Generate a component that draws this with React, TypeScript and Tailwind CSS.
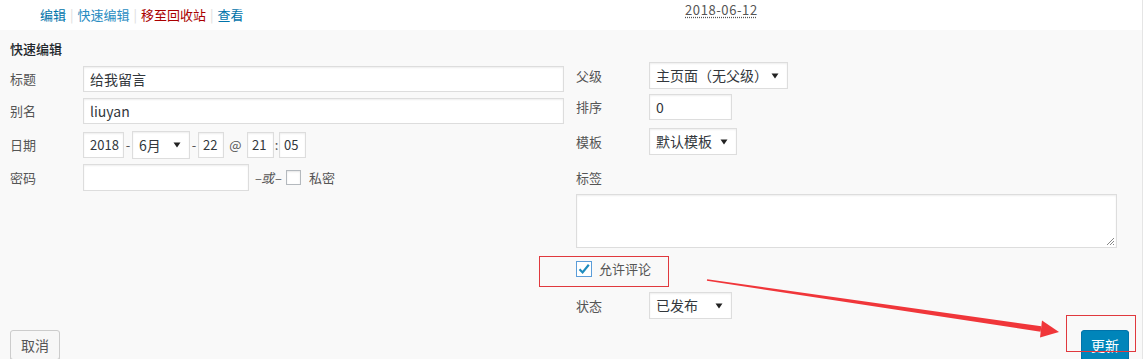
import React from 'react';

const font = { fontFamily: '"Noto Sans CJK SC", "Noto Sans", sans-serif' };

const Caret = () => (
    <svg width="8" height="6" viewBox="0 0 8 6" className="shrink-0">
        <path d="M0.5 0.5 L7.5 0.5 L4 5.5 Z" fill="#222" />
    </svg>
);

const Select: React.FC<{ value: string; className: string }> = ({ value, className }) => (
    <div className={`flex items-center justify-between bg-white border border-[#ddd] shadow-[0_1px_2px_rgba(0,0,0,0.07)_inset] pl-[6px] pr-[8px] text-[14px] text-[#32373c] ${className}`}>
        <span>{value}</span>
        <Caret />
    </div>
);

const Box: React.FC<{ value?: string; className: string }> = ({ value, className }) => (
    <div className={`flex items-center bg-white border border-[#ddd] shadow-[0_1px_2px_rgba(0,0,0,0.07)_inset] px-[6px] text-[#32373c] ${className}`}>
        {value}
    </div>
);

const Label: React.FC<{ text: string }> = ({ text }) => (
    <span className="w-[73px] shrink-0 text-[13px] text-[#555]">{text}</span>
);

const App: React.FC = () => {
    return (
        <div className="relative w-[1143px] h-[359px] overflow-hidden bg-white border-r border-[#e5e5e5]" style={font}>
            {/* Row actions */}
            <div className="flex items-center h-[30px] bg-white">
                <div className="w-[685px] pl-[40px] text-[13px] flex items-center">
                    <span className="text-[#0073aa]">编辑</span>
                    <span className="text-[#ddd] mx-[4px]">|</span>
                    <span className="text-[#2a8dc2]">快速编辑</span>
                    <span className="text-[#ddd] mx-[4px]">|</span>
                    <span className="text-[#a00]">移至回收站</span>
                    <span className="text-[#ddd] mx-[4px]">|</span>
                    <span className="text-[#0073aa]">查看</span>
                </div>
                <span className="text-[13px] tracking-[0.6px] text-[#555] underline decoration-dotted underline-offset-2 -mt-[10px]">2018-06-12</span>
            </div>

            {/* Quick edit panel */}
            <div className="bg-[#f9f9f9] h-[329px] pl-[10px] pr-[13px] pt-[10px]">
                <div className="text-[13px] font-medium text-[#23282d] h-[18px] leading-[18px]">快速编辑</div>

                <div className="flex items-start mt-[4px]">
                    {/* Left column */}
                    <div className="w-[566px] flex flex-col pt-[4px]">
                        <div className="flex items-center h-[26px]">
                            <Label text="标题" />
                            <Box value="给我留言" className="w-[481px] h-[26px] text-[14px]" />
                        </div>
                        <div className="flex items-center h-[26px] mt-[6px]">
                            <Label text="别名" />
                            <Box value="liuyan" className="w-[481px] h-[26px] text-[14px]" />
                        </div>
                        <div className="flex items-center h-[28px] mt-[7px] text-[13px] text-[#555]">
                            <Label text="日期" />
                            <Box value="2018" className="w-[41px] h-[26px] text-[13px]" />
                            <span className="w-[8px] text-center">-</span>
                            <Select value="6月" className="w-[58px] h-[28px]" />
                            <span className="w-[8px] text-center">-</span>
                            <Box value="22" className="w-[26px] h-[26px] text-[13px] !px-[4px]" />
                            <span className="w-[23px] text-center">@</span>
                            <Box value="21" className="w-[27px] h-[26px] text-[13px] !px-[4px]" />
                            <span className="w-[5px] text-center">:</span>
                            <Box value="05" className="w-[27px] h-[26px] text-[13px] !px-[4px]" />
                        </div>
                        <div className="flex items-center h-[27px] mt-[5px] text-[13px] text-[#555]">
                            <Label text="密码" />
                            <Box className="w-[166px] h-[27px]" />
                            <span className="italic ml-[5px] w-[32px] text-[13px]">–或–</span>
                            <span className="w-[15px] h-[15px] bg-white border border-[#b4b9be] shadow-[0_1px_2px_rgba(0,0,0,0.1)_inset]" />
                            <span className="ml-[8px]">私密</span>
                        </div>
                    </div>

                    {/* Right column */}
                    <div className="w-[541px] flex flex-col">
                        <div className="flex items-center h-[27px]">
                            <Label text="父级" />
                            <Select value="主页面（无父级）" className="w-[139px] h-[27px]" />
                        </div>
                        <div className="flex items-center h-[26px] mt-[5px]">
                            <Label text="排序" />
                            <Box value="0" className="w-[83px] h-[26px] text-[14px]" />
                        </div>
                        <div className="flex items-center h-[27px] mt-[8px]">
                            <Label text="模板" />
                            <Select value="默认模板" className="w-[88px] h-[27px]" />
                        </div>
                        <div className="text-[13px] text-[#555] mt-[14px] h-[18px] leading-[18px]">标签</div>
                        <div className="relative w-[541px] h-[54px] mt-[7px] bg-white border border-[#ddd] shadow-[0_1px_2px_rgba(0,0,0,0.07)_inset]">
                            <svg width="9" height="9" viewBox="0 0 9 9" className="absolute right-[1px] bottom-[1px]">
                                <path d="M8 1 L1 8 M8 4 L4 8 M8 7 L7 8" stroke="#888" strokeWidth="1" />
                            </svg>
                        </div>
                        <div className="flex items-center h-[16px] mt-[13px]">
                            <span className="w-[16px] h-[16px] bg-white border border-[#5b9dd9] flex items-center justify-center">
                                <svg width="14" height="14" viewBox="0 0 14 14">
                                    <path d="M2.5 7.2 L5.6 10.4 L11.8 2.8" stroke="#1e8cbe" strokeWidth="2.2" fill="none" />
                                </svg>
                            </span>
                            <span className="ml-[7px] text-[13px] text-[#555]">允许评论</span>
                        </div>
                        <div className="flex items-center h-[27px] mt-[15px]">
                            <Label text="状态" />
                            <Select value="已发布" className="w-[83px] h-[27px]" />
                        </div>
                    </div>
                </div>

                <div className="flex items-start justify-between mt-[11px]">
                    <button className="h-[30px] px-[10px] text-[14px] text-[#555] bg-[#f7f7f7] border border-[#ccc] rounded-[3px] shadow-[0_1px_0_#ccc]">
                        取消
                    </button>
                    <button className="h-[30px] w-[48px] text-[14px] text-white bg-[#0085ba] border border-[#0073aa] rounded-[3px] shadow-[0_1px_0_#006799]">
                        更新
                    </button>
                </div>
            </div>

            {/* Annotation overlays */}
            <div className="absolute left-[539px] top-[256px] w-[130px] h-[31px] border border-[#e0393e]" />
            <div className="absolute left-[1066px] top-[315px] w-[70px] h-[37px] border border-[#e0393e]" />
            <svg className="absolute left-0 top-0 pointer-events-none" width="1143" height="359">
                <polygon points="707.1,279.2 1041.4,326.3 1040.6,331.7 706.9,280.8" fill="#f0363a" />
                <polygon points="1042,320.5 1059,332 1040,337.5" fill="#f0363a" />
            </svg>
        </div>
    );
};

export default App;
